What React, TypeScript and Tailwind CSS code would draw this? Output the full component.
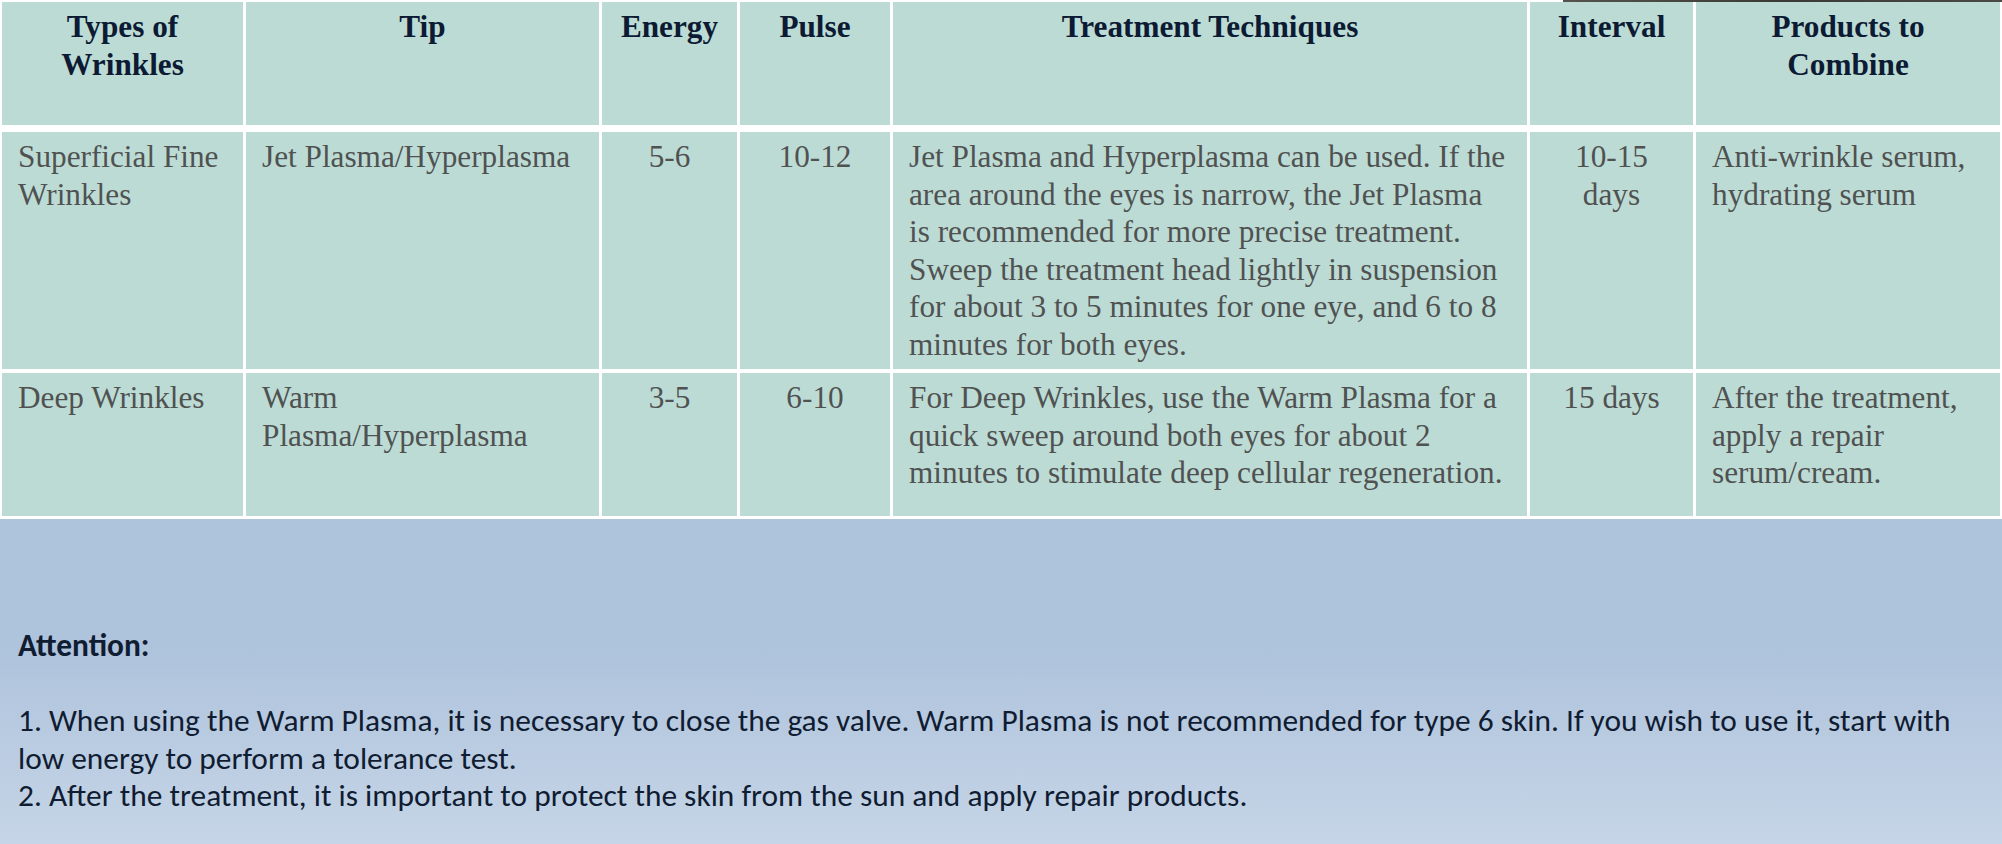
import React from "react";

const cols = "grid grid-cols-[241px_353px_135px_150px_634px_163px_304px] gap-x-[3px]";

const headers = [
  "Types of Wrinkles",
  "Tip",
  "Energy",
  "Pulse",
  "Treatment Techniques",
  "Interval",
  "Products to Combine",
];

const rows = [
  {
    height: "h-[237px]",
    cells: [
      "Superficial Fine Wrinkles",
      "Jet Plasma/Hyperplasma",
      "5-6",
      "10-12",
      "Jet Plasma and Hyperplasma can be used. If the area around the eyes is narrow, the Jet Plasma is recommended for more precise treatment. Sweep the treatment head lightly in suspension for about 3 to 5 minutes for one eye, and 6 to 8 minutes for both eyes.",
      "10-15 days",
      "Anti-wrinkle serum, hydrating serum",
    ],
  },
  {
    height: "h-[143px]",
    cells: [
      "Deep Wrinkles",
      "Warm Plasma/Hyperplasma",
      "3-5",
      "6-10",
      "For Deep Wrinkles, use the Warm Plasma for a quick sweep around both eyes for about 2 minutes to stimulate deep cellular regeneration.",
      "15 days",
      "After the treatment, apply a repair serum/cream.",
    ],
  },
];

// energy, pulse and interval are centred
const centered = [2, 3, 5];

export default function App() {
  return (
    <div className="w-[2002px] min-h-[844px] bg-white relative">
      <div className="absolute top-0 right-0 h-[2px] w-[439px] bg-gradient-to-r from-[#55534c] via-[#3b3a36] to-[#4a4945]" />

      <div className="bg-white pt-[2px] px-[2px] pb-[3px] font-['Liberation_Serif','Times_New_Roman',serif] text-[31.25px] leading-[37.5px]">
        <div className={`${cols} h-[123px]`}>
          {headers.map((h) => (
            <div key={h} className="bg-[#bddbd5] px-4 pt-[6px] text-center font-bold text-[#0c1b33]">
              {h}
            </div>
          ))}
        </div>

        {rows.map((row, r) => (
          <div key={r} className={`${cols} ${row.height} ${r === 0 ? "mt-[7px]" : "mt-[4px]"}`}>
            {row.cells.map((c, i) => (
              <div
                key={i}
                className={`bg-[#bddbd5] pt-[6px] text-[#4f5251] ${
                  centered.includes(i) ? "px-4 text-center" : "pl-4 pr-[18px] text-left"
                }`}
              >
                {c}
              </div>
            ))}
          </div>
        ))}
      </div>

      <div className="h-[325px] bg-gradient-to-b from-[#aec3dc] from-40% to-[#c6d5e7] px-[18px] pt-[108px] font-['Carlito','Calibri','Lato',sans-serif] text-[31.4px] leading-[37.5px] text-[#101c31]">
        <p className="font-bold">Attention:</p>
        <p className="mt-[37.5px]">
          1. When using the Warm Plasma, it is necessary to close the gas valve. Warm Plasma is not recommended for type 6
          skin. If you wish to use it, start with low energy to perform a tolerance test.
        </p>
        <p>2. After the treatment, it is important to protect the skin from the sun and apply repair products.</p>
      </div>
    </div>
  );
}
